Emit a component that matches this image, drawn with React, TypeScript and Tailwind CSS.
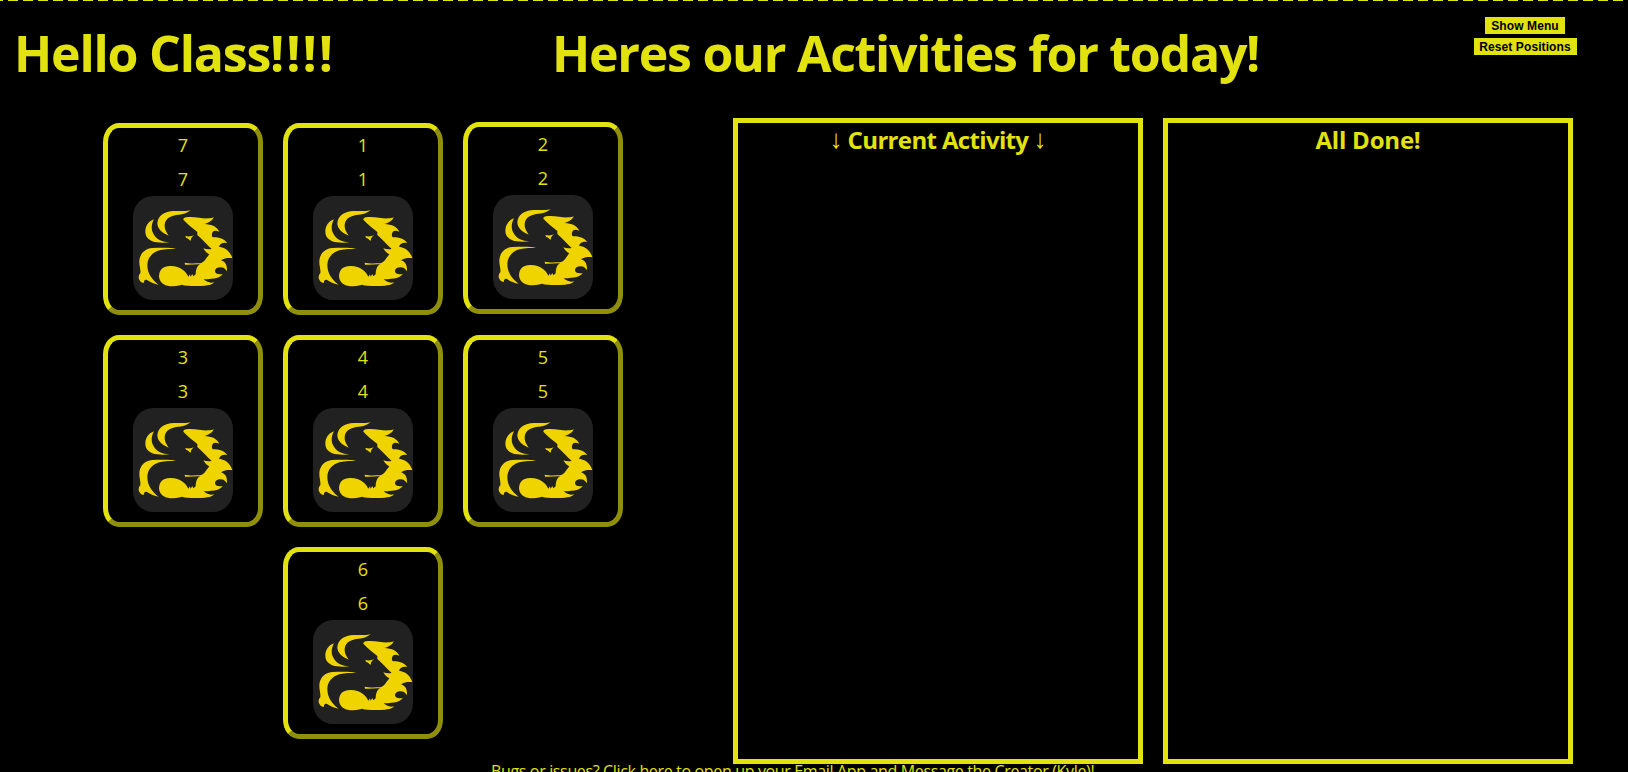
const sans = "font-['Open_Sans','Noto_Sans',sans-serif]";

function Bison() {
  return (
    <svg viewBox="3 6 300 312" className="block h-[104px] w-[100px] rounded-[20%] bg-[#212121]" fill="#f0d400" aria-hidden="true">
      <path d="M176 48C165 53 150 50 125 51C98 52 78 64 76 88C76 105 92 118 110 125C102 112 97 105 98 92C100 72 118 64 140 62C155 61 168 56 176 48Z" />
      <path d="M66 76C48 82 40 98 40 113C40 132 55 142 75 145C85 147 100 147 113 145C90 143 75 137 66 122C56 108 58 90 66 76Z" />
      <path d="M132 164C115 160 85 161 60 162C40 164 24 178 22 200C21 215 27 228 25 238C19 243 19 255 22 257C25 264 31 266 35 267C36 258 40 255 45 258C55 265 68 270 80 272C62 258 46 240 46 212C47 190 62 175 82 169C100 164 118 165 132 164Z" />
      <path d="M160 126C168 128 178 128 186 124C180 128 177 132 176 140C172 139 171 134 162 131Z" />
      <path d="M154 77C154 70 160 68 175 69C195 70 215 74 228 73C236 73 241 72 245 69C243 78 232 86 217 90C240 91 255 98 262 113C250 108 243 110 241 116C238 124 240 129 245 130C262 130 276 135 286 147C274 144 264 148 261 158C280 161 293 170 301 192C288 191 276 192 267 199C277 203 286 208 285 231C280 229 281 221 266 220C252 220 247 228 250 235C253 241 262 242 272 240C265 251 250 255 215 256C222 263 233 268 246 265C240 273 230 273 220 275C195 277 165 277 150 272C138 275 127 277 114 277C95 275 82 265 81 247C82 225 95 215 117 216C145 217 162 232 169 248L174 241L176 248L181 240L184 247L191 241C192 225 195 216 204 211C190 210 175 213 159 212L158 206C170 209 185 208 204 208C215 207 221 195 232 181C227 179 219 173 214 163C221 166 231 167 239 165C224 151 210 135 196 123L196 114C183 103 168 92 154 77Z" />
    </svg>
  );
}

function Card({ label, raised = false }: { label: string; raised?: boolean }) {
  return (
    <div className={`flex h-[192px] w-[160px] flex-col items-center rounded-[10%] border-[5px] border-t-[#e2e20e] border-r-[#8f8f09] border-b-[#8f8f09] border-l-[#e2e20e] ${raised ? "-mt-px" : ""}`}>
      <p className="mt-1 h-[34px] text-[18px] leading-[27px]">{label}</p>
      <p className="h-[30px] text-[18px] leading-[27px]">{label}</p>
      <Bison />
    </div>
  );
}

function Arrow() {
  return <span className="font-['Liberation_Sans',sans-serif] text-[26px] font-normal">↓</span>;
}

export default function App() {
  return (
    <div className={`h-[772px] w-full overflow-hidden bg-black text-[#e2e20e] ${sans}`}>
      <div className="h-px w-full bg-[repeating-linear-gradient(90deg,#e2e20e_0_3px,transparent_3px_8px,#e2e20e_8px_15px)]" />
      <header className="flex h-[117px] items-start">
        <h1 className="w-[540px] pt-[18px] pl-[14px] text-[50px] leading-[68px] font-bold tracking-[-1.2px] whitespace-nowrap">
          Hello Class<span className="tracking-[1.9px]">!!!!</span>
        </h1>
        <h1 className="w-[894px] pt-[18px] pl-[12px] text-[50px] leading-[68px] font-bold tracking-[-1.25px] whitespace-nowrap">Heres our Activities for today!</h1>
        <div className="flex w-[182px] flex-col items-center gap-1 pt-4 font-['Liberation_Sans',sans-serif] text-[12px] font-bold tracking-[0.1px] text-black">
          <button className="h-[17px] w-[80px] bg-[#e2e20e] pt-px leading-[16px] whitespace-nowrap">Show Menu</button>
          <button className="h-[17px] w-[103px] bg-[#e2e20e] pt-px leading-[16px] whitespace-nowrap">Reset Positions</button>
        </div>
      </header>
      <main className="flex h-[646px]">
        <section className="flex w-[733px] flex-wrap content-start justify-center gap-5 pt-[5px] pr-[110px] pl-[103px]">
          <Card label="7" />
          <Card label="1" />
          <Card label="2" raised />
          <Card label="3" />
          <Card label="4" />
          <Card label="5" />
          <Card label="6" />
        </section>
        <section className="flex gap-5">
          <div className="w-[410px] border-[5px] border-[#e2e20e]">
            <h2 className="flex justify-center gap-[5px] text-[24px] leading-[33px] font-bold whitespace-nowrap">
              <Arrow />
              <span className="tracking-[-0.65px]">Current Activity</span>
              <Arrow />
            </h2>
          </div>
          <div className="w-[410px] border-[5px] border-[#e2e20e]">
            <h2 className="text-center text-[24px] leading-[33px] font-bold tracking-[-0.2px]">All Done!</h2>
          </div>
        </section>
      </main>
      <footer className="pl-[491px] text-[16px] leading-[14px] tracking-[-0.35px] whitespace-nowrap">Bugs or issues? Click here to open up your Email App and Message the Creator (Kyle)!</footer>
    </div>
  );
}
